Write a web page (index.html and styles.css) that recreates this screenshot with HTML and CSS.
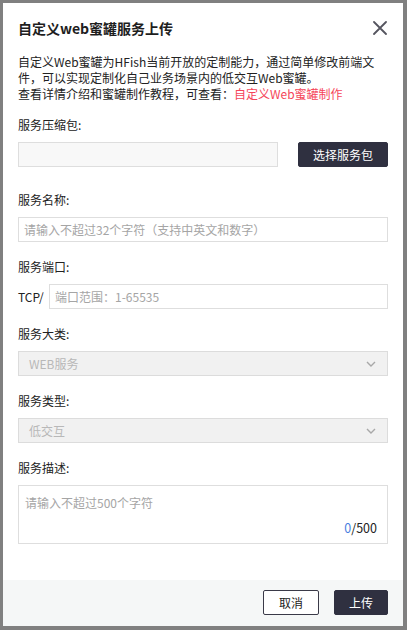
FILE: index.html
```html
<!DOCTYPE html>
<html lang="zh-CN">
<head>
<meta charset="utf-8">
<title>自定义web蜜罐服务上传</title>
<link rel="stylesheet" href="styles.css">
</head>
<body>
<div class="dialog">
  <div class="dialog-header">
    <h2 class="dialog-title">自定义web蜜罐服务上传</h2>
    <span class="close" aria-label="关闭">
      <svg width="14" height="14" viewBox="0 0 14 14"><path d="M1 1 L13 13 M13 1 L1 13" stroke="#55555f" stroke-width="1.8" fill="none" stroke-linecap="round"/></svg>
    </span>
  </div>
  <div class="dialog-body">
    <p class="desc">自定义Web蜜罐为HFish当前开放的定制能力，通过简单修改前端文件，可以实现定制化自己业务场景内的低交互Web蜜罐。<br>查看详情介绍和蜜罐制作教程，可查看：<a class="link">自定义Web蜜罐制作</a></p>

    <div class="item item-first">
      <div class="label">服务压缩包:</div>
      <div class="upload-row">
        <div class="input file-input"></div>
        <button class="btn btn-dark btn-choose">选择服务包</button>
      </div>
    </div>

    <div class="item item-second">
      <div class="label">服务名称:</div>
      <div class="input"><span class="placeholder">请输入不超过32个字符（支持中英文和数字）</span></div>
    </div>

    <div class="item">
      <div class="label">服务端口:</div>
      <div class="port-row">
        <span class="prefix">TCP/</span>
        <div class="input port-input"><span class="placeholder">端口范围：1-65535</span></div>
      </div>
    </div>

    <div class="item">
      <div class="label">服务大类:</div>
      <div class="select"><span>WEB服务</span>
        <svg class="chev" width="10" height="6" viewBox="0 0 10 6"><path d="M1 1 L5 5 L9 1" stroke="#a8a8a8" stroke-width="1.4" fill="none"/></svg>
      </div>
    </div>

    <div class="item">
      <div class="label">服务类型:</div>
      <div class="select"><span>低交互</span>
        <svg class="chev" width="10" height="6" viewBox="0 0 10 6"><path d="M1 1 L5 5 L9 1" stroke="#a8a8a8" stroke-width="1.4" fill="none"/></svg>
      </div>
    </div>

    <div class="item">
      <div class="label">服务描述:</div>
      <div class="textarea">
        <span class="placeholder">请输入不超过500个字符</span>
        <span class="counter"><span class="count-now">0</span>/500</span>
      </div>
    </div>
  </div>
  <div class="dialog-footer">
    <button class="btn btn-outline">取消</button>
    <button class="btn btn-dark btn-submit">上传</button>
  </div>
</div>
</body>
</html>
```

FILE: styles.css
```css
* { box-sizing: border-box; }

html, body {
  margin: 0;
  padding: 0;
}

body {
  background: #808080;
  font-family: "Noto Sans CJK SC", "Microsoft YaHei", sans-serif;
  color: #222;
  font-size: 12px;
  padding: 3px 0 0 3px;
}

.dialog {
  width: 400px;
  height: 623px;
  background: #fff;
  display: flex;
  flex-direction: column;
}

.dialog-header {
  display: flex;
  align-items: center;
  justify-content: space-between;
  padding: 15px 15px 0 15px;
  height: 35px;
}

.dialog-title {
  margin: 0;
  font-size: 14px;
  line-height: 20px;
  font-weight: 700;
  color: #1e1e1e;
}

.close {
  display: flex;
  width: 14px;
  height: 14px;
  margin-right: 1px;
}

.dialog-body {
  flex: 1;
  padding: 0 15px;
}

.desc {
  margin: 16px 0 0;
  line-height: 16px;
  font-size: 12px;
  color: #222;
}

.link {
  color: #f5455a;
  text-decoration: none;
}

.item { margin-top: 17px; }
.item-first { margin-top: 15px; }
.item-second { margin-top: 25px; }

.label {
  line-height: 16px;
  font-size: 12px;
  color: #222;
  margin-bottom: 9px;
}

.input {
  height: 25px;
  border: 1px solid #dedede;
  background: #fff;
  display: flex;
  align-items: center;
  padding: 0 5px;
  font-size: 12px;
}

.placeholder { color: #a5a5a5; }

.upload-row {
  display: flex;
  justify-content: space-between;
}

.file-input {
  width: 260px;
  background: #f8f8f8;
}

.btn {
  font-family: inherit;
  font-size: 12px;
  height: 25px;
  border: 1px solid #2f3040;
  cursor: pointer;
  padding: 0;
}

.btn-dark {
  background: #2f3040;
  color: #fff;
  border-radius: 2px;
}

.btn-choose { width: 90px; }

.port-row {
  display: flex;
  align-items: center;
}

.prefix {
  width: 31px;
  font-size: 12px;
  color: #222;
}

.port-input { flex: 1; }

.select {
  height: 25px;
  border: 1px solid #dcdcdc;
  background: #f1f1f1;
  display: flex;
  align-items: center;
  justify-content: space-between;
  padding: 0 11px 0 10px;
  color: #b8b8b8;
  font-size: 12px;
}

.chev { display: block; }

.textarea {
  height: 59px;
  border: 1px solid #dedede;
  padding: 8px 10px 6px 6px;
  display: flex;
  flex-direction: column;
  justify-content: space-between;
  line-height: 18px;
}

.counter {
  align-self: flex-end;
  color: #222;
  font-size: 12.5px;
  line-height: 18px;
}

.count-now { color: #4a7fe0; }

.dialog-footer {
  height: 46px;
  background: #f5f7f7;
  display: flex;
  justify-content: flex-end;
  align-items: flex-start;
  gap: 15px;
  padding: 10px 15px 0 0;
}

.btn-outline {
  width: 56px;
  background: #fff;
  color: #222;
  border: 1px solid #3a3a48;
  border-radius: 2px;
}

.btn-submit { width: 54px; }
```
